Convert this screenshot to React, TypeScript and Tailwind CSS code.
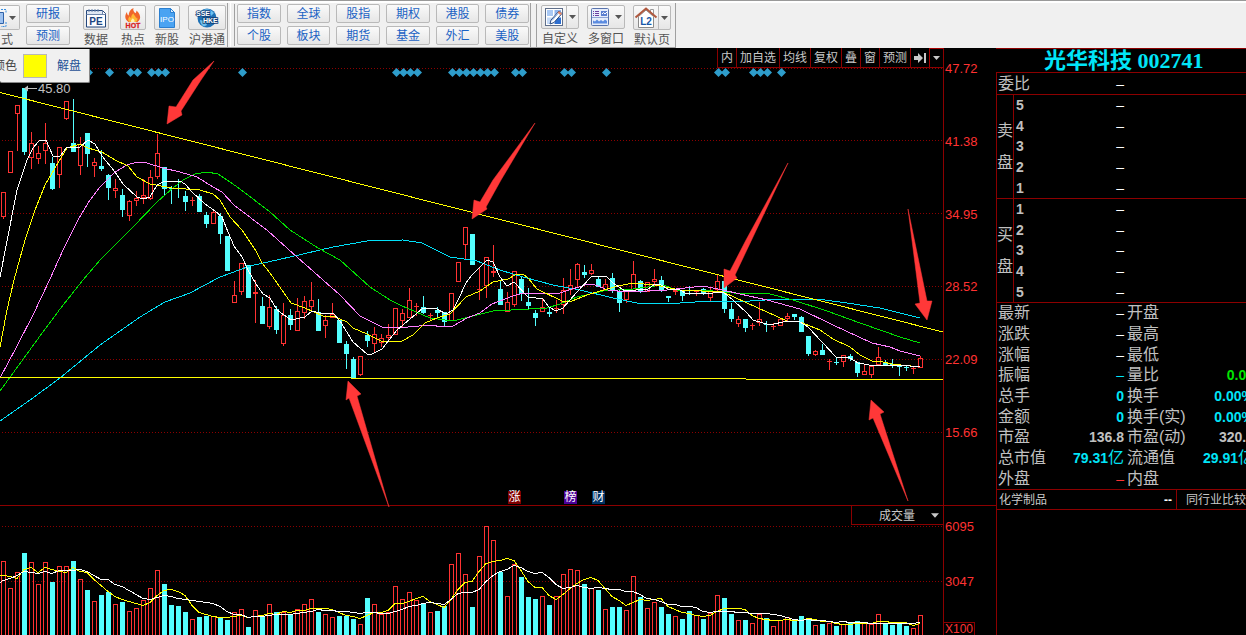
import React from "react";

type Dir = "u" | "d";
// high, body top, body bottom, low, direction
type Candle = [number, number, number, number, Dir];

const candles: Candle[] = [
  [192, 192, 217, 219, "u"], [151, 151, 173, 173, "u"], [105, 105, 114, 151, "u"], [88, 88, 152, 155, "d"],
  [132, 143, 158, 169, "u"], [146, 153, 159, 164, "u"], [123, 143, 151, 164, "u"], [157, 163, 189, 190, "d"],
  [147, 147, 175, 188, "u"], [101, 101, 119, 120, "u"], [99, 143, 152, 152, "d"], [137, 144, 166, 175, "u"],
  [133, 133, 154, 167, "d"], [158, 162, 166, 177, "u"], [150, 166, 169, 171, "d"], [174, 175, 188, 200, "d"],
  [179, 188, 191, 198, "u"], [189, 195, 210, 217, "d"], [200, 201, 216, 221, "u"], [191, 198, 201, 206, "u"],
  [179, 195, 198, 204, "u"], [170, 177, 199, 200, "u"], [134, 153, 177, 179, "u"], [167, 167, 189, 196, "d"],
  [186, 188, 189, 204, "d"], [179, 181, 182, 198, "d"], [191, 196, 202, 211, "d"], [197, 200, 201, 206, "u"],
  [194, 196, 212, 212, "d"], [212, 215, 224, 228, "d"], [211, 212, 224, 224, "u"], [213, 216, 234, 244, "d"],
  [236, 236, 271, 271, "d"], [281, 295, 303, 303, "u"], [263, 263, 292, 295, "u"], [265, 265, 298, 298, "d"],
  [280, 292, 294, 323, "u"], [297, 306, 324, 324, "d"], [295, 307, 327, 329, "u"], [306, 309, 330, 334, "d"],
  [303, 315, 344, 346, "u"], [309, 315, 325, 330, "d"], [298, 311, 331, 331, "u"], [296, 301, 313, 319, "u"],
  [282, 300, 307, 310, "u"], [299, 312, 331, 331, "d"], [315, 320, 326, 338, "u"], [303, 314, 318, 318, "u"],
  [320, 320, 343, 343, "d"], [341, 344, 354, 369, "d"], [357, 359, 378, 378, "d"], [356, 356, 375, 376, "u"],
  [331, 335, 341, 347, "d"], [327, 334, 344, 352, "u"], [334, 338, 343, 347, "u"], [324, 335, 338, 340, "u"],
  [308, 308, 335, 335, "u"], [309, 313, 321, 327, "u"], [288, 300, 318, 318, "u"], [303, 306, 307, 316, "u"],
  [296, 307, 313, 314, "d"], [313, 315, 316, 321, "u"], [307, 310, 313, 317, "d"], [312, 312, 322, 327, "d"],
  [293, 293, 321, 321, "u"], [262, 262, 282, 282, "u"], [227, 227, 245, 260, "u"], [234, 234, 265, 265, "d"],
  [268, 289, 290, 300, "u"], [257, 257, 286, 298, "u"], [245, 271, 273, 277, "u"], [281, 289, 305, 305, "d"],
  [292, 302, 312, 312, "u"], [271, 271, 305, 307, "u"], [276, 279, 294, 301, "d"], [288, 302, 306, 310, "d"],
  [310, 313, 318, 326, "d"], [298, 307, 312, 312, "u"], [308, 312, 314, 317, "d"], [300, 308, 309, 313, "u"],
  [278, 290, 305, 314, "u"], [269, 285, 290, 295, "u"], [263, 264, 280, 287, "u"], [265, 272, 275, 278, "d"],
  [264, 270, 274, 275, "u"], [276, 279, 287, 287, "d"], [279, 284, 290, 290, "u"], [273, 278, 290, 293, "d"],
  [289, 292, 303, 312, "d"], [291, 291, 300, 303, "u"], [261, 274, 291, 291, "u"], [280, 281, 292, 293, "d"],
  [282, 282, 292, 292, "u"], [269, 279, 282, 286, "u"], [276, 280, 290, 292, "d"], [296, 296, 298, 302, "d"],
  [290, 290, 292, 295, "u"], [290, 290, 296, 301, "d"], [286, 290, 291, 295, "d"], [290, 291, 292, 296, "u"],
  [288, 289, 294, 295, "d"], [287, 291, 298, 301, "u"], [275, 281, 290, 293, "u"], [281, 281, 309, 313, "d"],
  [303, 309, 319, 322, "d"], [316, 319, 324, 327, "u"], [319, 319, 328, 332, "d"], [323, 325, 326, 330, "u"],
  [302, 319, 323, 326, "u"], [321, 324, 325, 332, "d"], [323, 326, 327, 330, "u"], [319, 319, 326, 326, "u"],
  [313, 316, 319, 321, "u"], [314, 314, 317, 320, "d"], [316, 317, 332, 332, "d"], [336, 336, 354, 356, "d"],
  [350, 351, 355, 356, "u"], [344, 350, 355, 355, "d"], [359, 361, 362, 370, "u"], [358, 362, 363, 365, "d"],
  [355, 355, 362, 367, "u"], [354, 356, 359, 361, "d"], [362, 362, 373, 377, "d"], [365, 371, 375, 375, "u"],
  [366, 366, 375, 378, "u"], [347, 357, 365, 366, "u"], [360, 363, 365, 366, "d"], [359, 364, 366, 368, "d"],
  [364, 366, 367, 376, "d"], [365, 367, 368, 371, "d"], [366, 368, 369, 374, "u"], [356, 358, 368, 368, "u"],
];

const volumes = [
  561, 588, 572, 553, 562, 584, 562, 582, 566, 566, 561, 579, 590, 601, 595, 592, 604, 602, 611, 608, 600, 588,
  570, 584, 605, 606, 612, 619, 617, 616, 616, 617, 620, 612, 609, 627, 610, 616, 604, 612, 612, 614, 609, 604,
  599, 612, 614, 617, 616, 616, 619, 624, 598, 604, 614, 612, 586, 599, 592, 600, 604, 612, 611, 606, 564, 553,
  574, 607, 556, 526, 540, 572, 596, 564, 577, 597, 599, 596, 605, 596, 574, 569, 570, 584, 588, 590, 609, 607,
  607, 610, 576, 597, 608, 602, 607, 614, 616, 619, 611, 615, 619, 613, 595, 598, 614, 620, 620, 623, 614, 618,
  626, 620, 617, 621, 616, 618, 625, 624, 623, 626, 624, 623, 621, 623, 624, 614, 623, 625, 623, 626, 628, 615,
];
const volumeDown = new Set([
  3, 7, 10, 12, 14, 15, 17, 23, 24, 25, 26, 28, 29, 31, 32, 35, 37, 39, 41, 45, 48, 49, 50, 52, 60, 62, 63, 67, 71,
  74, 75, 76, 78, 83, 85, 87, 88, 91, 94, 95, 97, 98, 100, 103, 104, 106, 109, 113, 114, 115, 117, 119, 121, 122,
  126, 127, 128, 129,
]);

const cx = (i: number) => 3 + 7 * i;

function average(n: number, lead: number[]): string {
  return volumes
    .map((_, i) => {
      const y = i < lead.length ? lead[i] : volumes.slice(i - n + 1, i + 1).reduce((a, b) => a + b, 0) / n;
      return `${cx(i)},${Math.round(y) + 0.5}`;
    })
    .join(" ");
}
const volMa5 = "0,575.5 " + average(5, [575, 576, 578, 569]);
const volMa10 = "0,582.5 " + average(10, [580, 578, 575, 571, 572, 573, 571, 573, 570]);

const averages = [
  {
    color: "#00e0f8",
    points:
      "0,421 30,400 60,378 100,345 140,317 165,302 190,293 220,277 250,266 290,257 333,247 367,241 403,240 422,243 450,257 477,261 500,270 523,277 553,285 580,290 613,298 637,303 680,303 710,301 750,301 780,299 817,299 847,303 880,308 900,313 920,318",
  },
  {
    color: "#00e000",
    points:
      "0,391 40,336 60,309 83,280 100,260 133,227 157,202 173,188 183,180 195,174 207,172 218,174 230,182 240,189 270,212 290,230 318,248 340,260 370,287 390,300 400,305 430,318 453,321 493,311 547,308 560,304 577,297 603,291 633,289 663,285 677,290 703,290 733,293 770,294 793,300 827,311 860,323 883,331 900,337 920,343",
  },
  {
    color: "#ff80ff",
    points:
      "0,378 16,348 33,315 50,279 63,250 78,220 88,203 100,187 115,172 127,165 137,162 147,163 163,168 180,172 197,177 213,187 222,192 234,205 268,231 297,257 340,295 360,316 382,327 397,328 430,325 443,327 453,326 467,318 480,313 492,304 513,296 523,293 560,293 588,284 595,285 608,290 627,292 667,290 703,286 723,290 740,294 767,300 800,309 833,325 872,343 890,347 900,351 920,356",
  },
  {
    color: "#ffff00",
    points:
      "0,347 7,310 14,280 25,240 35,210 45,185 55,168 67,148 80,144 88,148 102,152 115,160 128,166 137,177 150,184 172,188 200,190 213,194 220,200 230,217 242,230 256,251 262,263 270,273 291,303 305,308 323,316 333,316 347,322 353,328 367,334 383,342 402,341 413,335 425,323 437,318 450,314 466,297 480,291 493,282 508,279 515,275 523,274 528,278 537,289 562,301 572,301 587,295 600,291 618,286 633,283 655,285 680,290 723,292 747,303 767,312 787,321 800,322 820,330 833,339 850,347 860,355 872,361 883,362 892,364 920,367",
  },
  {
    color: "#ffffff",
    points:
      "0,277 8,236 17,190 27,160 33,148 39,141 46,140 53,156 60,156 67,147 80,147 88,140 95,144 102,156 115,172 123,184 137,197 143,199 150,197 157,185 163,182 180,181 185,184 192,192 205,204 215,211 222,217 228,232 234,246 242,257 248,270 256,284 263,294 270,298 277,310 291,320 305,317 312,311 320,313 333,313 340,321 353,342 367,354 372,354 382,349 397,330 423,308 437,309 446,314 453,310 459,298 466,283 472,275 487,260 493,262 500,277 507,286 514,282 528,297 543,299 549,307 556,311 563,308 577,292 591,277 606,276 613,283 625,291 648,289 655,284 661,285 668,289 680,290 687,294 713,293 723,292 733,300 747,313 753,320 770,325 787,321 800,322 808,327 822,342 836,357 850,358 858,363 875,366 900,365 920,367",
  },
];

const arrows = [
  "214,61 193,80 176,107 169,106 167,124 182,115 181,111 201,80",
  "535,123 493,180 480,202 474,200 472,219 487,209 486,207 501,180",
  "788,163 746,240 730,271 724,269 724,288 737,278 735,275",
  "908,209 920,303 915,304 927,320 932,301 927,301",
  "389,507 349,398 346,400 348,381 361,394 357,396",
  "908,501 873,418 869,420 871,400 884,412 880,414",
];

const diamonds = [
  88, 109, 130, 137, 151, 158, 165, 242, 396, 403, 410, 417, 452, 459, 466, 473, 480, 487, 494, 515, 522, 564, 571,
  606, 718, 725, 753, 760, 767, 781,
];

const RED = "#ff3232";
const CYAN = "#54ffff";

function CandleMark({ c, i }: { c: Candle; i: number }) {
  const [hi, top, bottom, lo, dir] = c;
  const x = cx(i);
  if (dir === "d") {
    return (
      <path fill={CYAN} d={`M${x - 2} ${top}h5V${bottom}h-5zM${x} ${hi}h1V${lo}h-1z`} />
    );
  }
  if (bottom - top <= 2) {
    return <path fill={RED} d={`M${x - 2} ${top}h5V${bottom}h-5zM${x} ${hi}h1V${lo}h-1z`} />;
  }
  return (
    <path
      fill="none"
      stroke={RED}
      d={`M${x - 1.5} ${top + 0.5}h4V${bottom - 0.5}h-4zM${x + 0.5} ${hi}V${top}M${x + 0.5} ${bottom}V${lo}`}
    />
  );
}

function PriceChart() {
  return (
    <svg
      viewBox="0 48 943 457"
      preserveAspectRatio="none"
      className="relative z-10 min-w-0 flex-1 overflow-visible"
      role="img"
      aria-label="K线图"
    >
      <g shapeRendering="crispEdges">
        {[68, 140, 213, 286, 359, 432].map((y) => (
          <path key={y} d={`M2 ${y + 0.5}H943`} stroke="#8c0000" strokeDasharray="1 2" />
        ))}
        {candles.map((c, i) => (
          <CandleMark key={i} c={c} i={i} />
        ))}
        {averages.map((a) => (
          <polyline key={a.color} points={a.points} fill="none" stroke={a.color} />
        ))}
        <path d="M0 92.5L943 332" stroke="#ffff00" />
        <path d="M0 377.5H351M351 378.5H746M746 379.5H943" stroke="#ffff00" />
      </g>
      {diamonds.map((x) => (
        <path key={x} d={`M${x + 0.5} 68l4.5 4.5l-4.5 4.5l-4.5 -4.5z`} fill="#2e9dcb" />
      ))}
      <path d="M24 88.5l4-3v2.500h9v1h-9v2.500z" fill="#c0c0c0" />
      {arrows.map((p) => (
        <polygon key={p} points={p} fill="#ff3838" stroke="#ff3838" strokeWidth="0.5" />
      ))}
    </svg>
  );
}

function VolumeChart() {
  return (
    <svg
      viewBox="0 506 943 129"
      preserveAspectRatio="none"
      className="h-full min-w-0 flex-1"
      role="img"
      aria-label="成交量"
      shapeRendering="crispEdges"
    >
      {[526, 581].map((y) => (
        <path key={y} d={`M2 ${y + 0.5}H943`} stroke="#8c0000" strokeDasharray="1 2" />
      ))}
      {volumes.map((y, i) =>
        volumeDown.has(i) ? (
          <rect key={i} x={cx(i) - 2} y={y} width="5" height={640 - y} fill={CYAN} />
        ) : (
          <rect key={i} x={cx(i) - 1.5} y={y + 0.5} width="4" height={640 - y} fill="none" stroke={RED} />
        )
      )}
      <polyline points={volMa5} fill="none" stroke="#ffff00" />
      <polyline points={volMa10} fill="none" stroke="#ffffff" />
    </svg>
  );
}

function Caret({ className }: { className: string }) {
  return (
    <svg viewBox="0 0 7 4" className={className} aria-hidden="true">
      <path d="M0 0h7L3.500 4z" fill="currentColor" />
    </svg>
  );
}

function PeIcon() {
  return (
    <svg viewBox="0 0 24 24" className="size-6" aria-hidden="true">
      <path d="M2.500 4.500h16l3 3v13.500h-19z" fill="#fdfdff" stroke="#24477c" />
      <path d="M3 5h15.500v3H3z" fill="#dfe7f3" />
      <path d="M2.500 8.500h19M18.500 4.500v4M5 3v3M8 3v3M11 3v3M14 3v3" stroke="#6f87ad" fill="none" />
      <text x="12" y="18.500" textAnchor="middle" fontSize="10" fontWeight="700" fill="#1c4480" fontFamily="Liberation Sans, sans-serif">PE</text>
    </svg>
  );
}

function HotIcon() {
  return (
    <svg viewBox="0 0 24 24" className="size-6" aria-hidden="true">
      <path d="M7.500 16C3 13 4 8.500 6 6c0 2 .6 3 1.600 3.400C8 6 9 3.500 12.500 2c-.8 2.500.5 3.800 2 5.200.8-.8 1-1.600.8-2.700C18.500 7 21.500 12.500 16.500 16z" fill="#f0652a" />
      <path d="M8.500 16c-2.200-2.200-1-4.500.3-5.800.3 1 .8 1.600 1.400 1.700 0-2 .8-3.500 2.300-4.700 0 2 2.800 3 2.500 5.300.5-.2.8-.7.900-1.200C17 13 16.500 15 15 16z" fill="#ffb733" />
      <path d="M10.200 16c-.8-1.500.5-2.600 1.600-3.800 1.400 1.200 2.200 2.400 1.500 3.800z" fill="#fff3b0" />
      <text x="12" y="22" textAnchor="middle" fontSize="7" fontWeight="700" fill="#d81e1e" stroke="#d81e1e" strokeWidth="0.300" fontFamily="Liberation Sans, sans-serif">HOT</text>
    </svg>
  );
}

function IpoIcon() {
  return (
    <svg viewBox="0 0 24 24" className="size-6" aria-hidden="true">
      <path d="M4.500 2.500h11l4 4v15h-15z" fill="#4aa3f2" stroke="#2b7fd0" />
      <path d="M15.500 2.500v4h4z" fill="#d6ecff" stroke="#2b7fd0" />
      <text x="12" y="16" textAnchor="middle" fontSize="8" fill="#ffffff" fontFamily="Liberation Sans, sans-serif">IPO</text>
    </svg>
  );
}

function GlobeIcon() {
  return (
    <svg viewBox="0 0 30 24" className="h-6 w-[30px]" aria-hidden="true">
      <circle cx="15" cy="12" r="9.500" fill="#1d70b5" />
      <path d="M10 5c4-3 9-2 12 2l-3 3-4-2-3 2zM8 14l5 1 2 4-3 1.500c-2.500-1-4-4-4-6.500z" fill="#6cc0ee" />
      <g fontSize="7" fontWeight="700" fill="#ffffff" stroke="#123f78" strokeWidth="1.600" paintOrder="stroke" fontFamily="Liberation Sans, sans-serif">
        <text x="4" y="9.500">SSE</text>
        <text x="11" y="17">HKE</text>
      </g>
    </svg>
  );
}

function CustomIcon() {
  return (
    <svg viewBox="0 0 20 20" className="size-5" aria-hidden="true">
      <rect x="1.500" y="1.500" width="17" height="17" fill="#fff" stroke="#5f6f8a" />
      <rect x="3" y="3" width="6" height="6" fill="#a9c9f5" />
      <rect x="10.500" y="3" width="6.500" height="6" fill="#8fb5ee" />
      <rect x="3" y="10.500" width="6" height="6.500" fill="#c6dbf8" />
      <rect x="10.500" y="10.500" width="6.500" height="6.500" fill="#2e6fd0" />
      <path d="M15 4l3 2.500-8 9-4 1.500 1-4z" fill="#fff" stroke="#2a4a80" />
      <path d="M15 4l3 2.500-1.500 1.700-3-2.500z" fill="#e88a6a" />
      <path d="M8 13.500l6-7" stroke="#7aa0dc" />
    </svg>
  );
}

function WindowsIcon() {
  return (
    <svg viewBox="0 0 20 20" className="size-5" aria-hidden="true">
      <rect x="1.500" y="1.500" width="17" height="17" rx="1" fill="#e6edfb" stroke="#5873ad" />
      <path d="M3 4.500h6M3 6.500h6M3 8.500h6" stroke="#6a3fa0" strokeDasharray="1 1 4" />
      <rect x="11" y="4" width="6" height="5" fill="#5b7fd0" />
      <path d="M12 7l1.500-1.500L15 7l2-2" stroke="#fff" fill="none" />
      <path d="M3 16.500v-3l2 1 2-2 2 2 2-1.500 2 1.500 2-2 2 1.500v2.500z" fill="#5b8be0" />
      <path d="M2 10.500h16" stroke="#8ea5d5" />
    </svg>
  );
}

function HomeIcon() {
  return (
    <svg viewBox="0 0 24 24" className="size-6" aria-hidden="true">
      <path d="M16.500 3.500h3v5h-3z" fill="#fff" stroke="#999" />
      <path d="M4.500 10.500L12 4l7.500 6.500v11h-15z" fill="#fff" stroke="#8a8a8a" />
      <path d="M1.500 11.500L12 2.500l10.500 9" fill="none" stroke="#b0583e" strokeWidth="2" />
      <text x="12" y="19" textAnchor="middle" fontSize="10" fontWeight="700" fill="#1858a8" fontFamily="Liberation Sans, sans-serif">L2</text>
    </svg>
  );
}

const face = "rounded-xs border border-[#b9b9b9] bg-linear-to-b from-[#fafafa] to-[#e6e6e6]";

function SmallButton({ label }: { label: string }) {
  return (
    <button type="button" className={`${face} h-[19px] w-full text-center leading-4 text-[#1a62c4]`}>
      {label}
    </button>
  );
}

function IconButton({ label, icon }: { label: string; icon: React.ReactNode }) {
  return (
    <button type="button" className="flex flex-col items-center gap-0.5 text-[#555]">
      <span className={`${face} flex h-[25px] min-w-[26px] items-center justify-center self-stretch`}>{icon}</span>
      <span className="px-px leading-4">{label}</span>
    </button>
  );
}

function MenuButton({ label, icon, split }: { label: string; icon: React.ReactNode; split: boolean }) {
  return (
    <button type="button" className="flex w-[38px] flex-col items-center gap-0.5 text-[#555]">
      <span className={`${face} flex h-[25px] w-full items-stretch`}>
        <span className="flex flex-1 items-center justify-center">{icon}</span>
        <span className={`flex w-3 items-center justify-center ${split ? "border-l border-[#b9b9b9]" : ""}`}>
          <Caret className="h-1 w-[7px] shrink-0" />
        </span>
      </span>
      <span className="leading-4">{label}</span>
    </button>
  );
}

const markets = ["指数", "全球", "股指", "期权", "港股", "债券", "个股", "板块", "期货", "基金", "外汇", "美股"];

function Toolbar() {
  return (
    <header className="flex h-12 shrink-0 overflow-hidden border-t border-[#999] bg-[#f0f0f0] text-xs">
      <div className="flex shrink-0 border-t-2 border-b border-t-white border-b-[#a0a0a0]">
        <div className="flex items-start border-r border-[#a0a0a0] pt-px">
          <button type="button" className="mt-px flex w-5 flex-col gap-0.5 text-[#555]">
            <span className={`${face} flex h-[25px] w-full items-center justify-between rounded-l-none border-l-0 pr-[3px]`}>
              <svg viewBox="0 0 7 20" className="h-5 w-[7px]" aria-hidden="true">
                <path d="M0 4.500h3.500v11H0" fill="#9cc1f0" stroke="#2f62a8" />
                <path d="M1 1.500h5v4M6 14v4.500H1" fill="none" stroke="#3a8fe0" strokeDasharray="2 1" />
              </svg>
              <Caret className="h-1 w-[7px]" />
            </span>
            <span className="pl-px text-left leading-4">式</span>
          </button>
          <div className="ml-1.5 grid w-11 gap-[3px]">
            <SmallButton label="研报" />
            <SmallButton label="预测" />
          </div>
          <div className="mt-px mr-px ml-[13px] flex">
            <IconButton label="数据" icon={<PeIcon />} />
            <div className="ml-[11px] flex gap-2">
              <IconButton label="热点" icon={<HotIcon />} />
              <IconButton label="新股" icon={<IpoIcon />} />
              <IconButton label="沪港通" icon={<GlobeIcon />} />
            </div>
          </div>
        </div>
        <div className="ml-0.5 border-x border-[#a0a0a0] border-l-white pt-px pr-px">
          <div className="ml-[3px] flex h-[42px] border-l border-[#a0a0a0] pl-0.5">
            <div className="grid h-[41px] w-[292px] grid-cols-6 gap-x-1.5 gap-y-[3px]">
              {markets.map((m) => (
                <SmallButton key={m} label={m} />
              ))}
            </div>
          </div>
        </div>
        <div className="border-r border-[#a0a0a0] pt-px pr-1 pl-[5px]">
          <div className="flex h-[43px] gap-2 border-l border-[#a0a0a0] pt-px pl-1">
            <MenuButton label="自定义" icon={<CustomIcon />} split />
            <MenuButton label="多窗口" icon={<WindowsIcon />} split={false} />
            <MenuButton label="默认页" icon={<HomeIcon />} split />
          </div>
        </div>
      </div>
      <div className="flex-1 border-t-2 border-white" />
    </header>
  );
}

function ChartTools() {
  const items = ["内", "加自选", "均线", "复权", "叠", "窗", "预测"];
  return (
    <div className="absolute top-0 right-0 z-20 flex h-5 border-b border-[#8c0000] bg-black text-xs text-[#c8c8c8]">
      {items.map((t) => (
        <button key={t} type="button" className="border-l border-[#8c0000] px-[3px] leading-[21px]">
          {t}
        </button>
      ))}
      <button type="button" aria-label="右移" className="border-l border-[#8c0000] px-[3px]">
        <svg viewBox="0 0 12 12" className="size-3" aria-hidden="true">
          <path d="M0 4h4V1l5 5-5 5V8H0zM10 1h2v10h-2z" fill="#c8c8c8" />
        </svg>
      </button>
      <button type="button" aria-label="更多" className="border border-r-0 border-b-0 border-[#a80000] px-[3px]">
        <Caret className="h-1 w-[7px]" />
      </button>
    </div>
  );
}

function DrawPanel() {
  return (
    <div className="absolute top-px left-0 z-20 flex h-[34px] w-[90px] items-center justify-end overflow-hidden rounded-b-xs border-r border-b border-[#888] bg-[#f0f0f0] pr-2 text-xs">
      <span className="mr-1.5 shrink-0 text-[#444]">颜色</span>
      <button type="button" aria-label="颜色" className="mr-2.5 size-6 shrink-0 border border-[#b8b8b8] bg-[#ffff00]" />
      <button type="button" className="shrink-0 text-[#1f5096]">解盘</button>
    </div>
  );
}

const axisText = "pl-px text-[13px] leading-5 text-[#ff3232]";

const sheet: [string, string, string, string, string, string][] = [
  ["最新", "–", "text-white", "开盘", "–", "text-white"],
  ["涨跌", "–", "text-white", "最高", "–", "text-white"],
  ["涨幅", "–", "text-white", "最低", "–", "text-white"],
  ["振幅", "–", "text-[#00e5f8]", "量比", "0.00", "text-[#00e600]"],
  ["总手", "0", "text-[#00e5f8]", "换手", "0.00%", "text-[#00e5f8]"],
  ["金额", "0", "text-[#00e5f8]", "换手(实)", "0.00%", "text-[#00e5f8]"],
  ["市盈", "136.8", "text-[#c0c0c0]", "市盈(动)", "320.0", "text-[#c0c0c0]"],
  ["总市值", "79.31亿", "text-[#00e5f8]", "流通值", "29.91亿", "text-[#00e5f8]"],
  ["外盘", "–", "text-[#ff3232]", "内盘", "–", "text-[#00e600]"],
];

function Value({ text }: { text: string }) {
  if (text === "–") return <span className="font-normal">–</span>;
  const unit = text.endsWith("亿");
  return (
    <>
      {unit ? text.slice(0, -1) : text}
      {unit && <span className="text-base leading-5 font-normal">亿</span>}
    </>
  );
}

function OrderSide({ label, levels }: { label: string; levels: number[] }) {
  return (
    <section className="flex h-[104px] border-t border-[#8c0000]">
      <h2 className="flex w-[17px] flex-col justify-center gap-4 border-r border-[#8c0000] text-base leading-4 text-[#c0c0c0]">
        {label.split("").map((c) => (
          <span key={c}>{c}</span>
        ))}
      </h2>
      <table className="h-[103px] w-[110px] text-sm leading-5 font-bold">
        <tbody>
          {levels.map((n) => (
            <tr key={n}>
              <th scope="row" className="p-0 pl-0.5 text-left text-[#c0c0c0]">{n}</th>
              <td className="p-0 text-right font-normal text-white">–</td>
            </tr>
          ))}
        </tbody>
      </table>
    </section>
  );
}

function QuotePanel() {
  return (
    <aside className="flex w-[250px] shrink-0 flex-col overflow-hidden">
      <h1 className="h-6 border-t border-[#8c0000] pl-12 font-['Liberation_Serif','Noto_Sans_CJK_SC',serif] text-[22px] leading-[23px] font-bold whitespace-nowrap text-[#00e5f8]">
        光华科技 002741
      </h1>
      <div className="flex flex-1 flex-col border-t border-l border-[#8c0000]">
        <dl className="flex h-[21px] w-[127px] items-center justify-between pl-px text-base leading-5 text-[#c0c0c0]">
          <dt>委比</dt>
          <dd className="text-sm text-white">–</dd>
        </dl>
        <OrderSide label="卖盘" levels={[5, 4, 3, 2, 1]} />
        <OrderSide label="买盘" levels={[1, 2, 3, 4, 5]} />
        <div className="border-t border-[#8c0000]">
          <table className="h-[186px] w-[257px] table-fixed text-base leading-5 whitespace-nowrap">
            <tbody>
              {sheet.map(([a, av, ac, b, bv, bc]) => (
                <tr key={a}>
                  <th scope="row" className="w-[60px] p-0 pl-px text-left font-normal text-[#c0c0c0]">{a}</th>
                  <td className={`w-[68px] p-0 pr-px text-right text-sm leading-5 font-bold ${ac}`}><Value text={av} /></td>
                  <th scope="row" className="w-[62px] p-0 pl-0.5 text-left font-normal text-[#c0c0c0]">{b}</th>
                  <td className={`p-0 text-right text-sm leading-5 font-bold ${bc}`}><Value text={bv} /></td>
                </tr>
              ))}
            </tbody>
          </table>
        </div>
        <div className="flex h-[21px] border-y border-[#8c0000] text-xs leading-5 whitespace-nowrap text-[#c8c8c8]">
          <a href="#industry" className="pl-0.5">化学制品</a>
          <span className="ml-auto pr-1 font-bold text-white">--</span>
          <a href="#peers" className="border-l border-[#8c0000] pl-[9px]">同行业比较</a>
        </div>
      </div>
    </aside>
  );
}

export default function App() {
  return (
    <div className="flex min-h-screen flex-col overflow-hidden bg-black font-['Liberation_Sans','Noto_Sans_CJK_SC',sans-serif]">
      <Toolbar />
      <main className="flex flex-1">
        <div className="flex min-w-0 flex-1 flex-col">
          <section className="flex flex-1">
            <div className="relative flex min-w-0 flex-1">
              <PriceChart />
              <DrawPanel />
              <ChartTools />
              <span className="absolute top-[33px] left-[38px] z-20 text-[13px] leading-4 text-[#c0c0c0]">45.80</span>
              <div className="absolute bottom-px left-[508px] z-20 flex text-xs leading-[13px] text-white">
                <span className="w-[13px] bg-[#800000] text-center">涨</span>
                <span className="ml-[43px] w-[13px] bg-[#4b0096] text-center">榜</span>
                <span className="ml-[15px] w-[13px] bg-[#003264] text-center">财</span>
              </div>
            </div>
            <div className="flex w-[53px] flex-col justify-between border-l border-[#8c0000] pt-[11px] pb-[62px]">
              {["47.72", "41.38", "34.95", "28.52", "22.09", "15.66"].map((v) => (
                <span key={v} className={axisText}>{v}</span>
              ))}
            </div>
          </section>
          <section className="flex h-[130px] border-t border-[#8c0000]">
            <div className="relative flex min-w-0 flex-1">
              <VolumeChart />
              <div className="absolute top-0 right-0 flex h-[19px] w-[92px] items-center border-b border-l border-[#8c0000] bg-black text-[#c8c8c8]">
                <select aria-label="指标" className="h-full w-full appearance-none bg-transparent pt-0.5 pl-[27px] text-xs leading-4">
                  <option>成交量</option>
                </select>
                <Caret className="pointer-events-none absolute right-1 h-[5px] w-2" />
              </div>
            </div>
            <div className="flex w-[53px] flex-col items-start overflow-hidden border-l border-[#8c0000] pt-[11px]">
              <span className={axisText}>6095</span>
              <span className={`mt-[35px] ${axisText}`}>3047</span>
              <span className="mt-auto h-[13px] border border-b-0 border-l-0 border-[#8c0000] px-px text-xs leading-[13px] text-[#ff3232]">
                X100
              </span>
            </div>
          </section>
        </div>
        <QuotePanel />
      </main>
    </div>
  );
}
